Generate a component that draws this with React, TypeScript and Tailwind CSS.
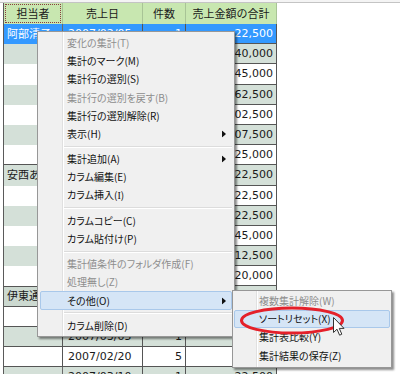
import React from "react";

type Row = {
  name?: string;
  date: string;
  n: string;
  amt: string;
  c1Bottom?: boolean;
  box?: boolean;
};

const rows: Row[] = [
  { name: "阿部清子", date: "2007/02/05", n: "1", amt: "22,500" },
  { date: "", n: "", amt: "40,000" },
  { date: "", n: "", amt: "45,000" },
  { date: "", n: "", amt: "62,500" },
  { date: "", n: "", amt: "102,500" },
  { date: "", n: "", amt: "107,500" },
  { date: "", n: "", amt: "225,000", c1Bottom: true },
  { name: "安西あゆみ", date: "", n: "", amt: "22,500" },
  { date: "", n: "", amt: "22,500" },
  { date: "", n: "", amt: "22,500" },
  { date: "", n: "", amt: "45,000" },
  { date: "", n: "", amt: "112,500" },
  { date: "", n: "", amt: "20,000" },
  { name: "伊東通子", date: "", n: "", amt: "", box: true },
  { date: "", n: "", amt: "", c1Bottom: true },
  { date: "2007/03/05", n: "1", amt: "", c1Bottom: true },
  { date: "2007/02/20", n: "5", amt: "12,500", c1Bottom: true },
  { date: "2007/03/10", n: "1", amt: "22,500" },
];

function TableRow({ r, i }: { r: Row; i: number }) {
  const sel = i === 0;
  const gray = i % 2 === 1;
  const bg = sel ? "bg-[#3399ff] text-white" : gray ? "bg-[#d4e0d8] text-[#1a1a1a]" : "bg-white text-[#1a1a1a]";
  const c1 = r.box
    ? "border-y border-[#555555] bg-[#ccd9d0]"
    : r.c1Bottom
    ? "border-b border-[#555555]"
    : "";
  return (
    <div className={`flex h-[20.2px] ${bg}`}>
      <div className={`w-[59px] h-full border-r border-[#6a6a6a] pl-[3px] flex items-center overflow-hidden whitespace-nowrap ${c1}`}>
        {r.name ?? ""}
      </div>
      <div className="w-[80px] h-full border-r border-b border-[#555555] pl-[5px] flex items-center whitespace-nowrap overflow-hidden">
        {r.date}
      </div>
      <div className="w-[43px] h-full border-r border-b border-[#555555] pr-[3px] flex items-center justify-end">
        {r.n}
      </div>
      <div className="w-[91px] h-full border-r border-b border-[#555555] pr-[3px] flex items-center justify-end whitespace-nowrap overflow-hidden">
        {r.amt}
      </div>
    </div>
  );
}

function MItem({
  label,
  disabled,
  arrow,
  hl,
  pl,
}: {
  label: React.ReactNode;
  disabled?: boolean;
  arrow?: boolean;
  hl?: boolean;
  pl: "main" | "sub";
}) {
  const base = hl
    ? "border border-[#a9c8ea] bg-[#d5e5f6] rounded-[2px]"
    : "border border-transparent";
  const pad = pl === "main" ? "pl-[26px]" : "pl-[24px]";
  return (
    <div className={`relative h-[18.2px] flex items-center whitespace-nowrap ${pad} ${base} ${disabled ? "text-[#8d8d8d]" : "text-[#111111]"}`}>
      {label}
      {arrow && (
        <svg className="absolute right-[5px] top-1/2 -translate-y-1/2" width="4" height="7" viewBox="0 0 4 7">
          <path d="M0 0 L4 3.5 L0 7 Z" fill="#111" />
        </svg>
      )}
    </div>
  );
}

function Sep() {
  return (
    <div className="h-[7px] pl-[22px] flex flex-col justify-center">
      <div className="h-px bg-[#dcdcdc]" />
      <div className="h-px bg-white" />
    </div>
  );
}

export default function App() {
  return (
    <div className="relative w-[400px] h-[374px] overflow-hidden bg-white text-[11px] leading-none">
      <div className="h-[3px] border-b border-[#c4c4c4] bg-[#f4f4f4]" />
      <div className="flex">
        <div className="w-[3px] bg-white" />
        <div className="border-l border-[#5a5a5a] font-['DejaVu_Sans','Noto_Sans_CJK_JP',sans-serif]">
          <div className="flex h-[21px] bg-[#c8e7b0] text-[#1a1a1a] font-['Noto_Sans_CJK_JP',sans-serif] text-[11px]">
            <div className="w-[59px] h-full border-r border-[#a8c496] p-[1px]">
              <div className="w-full h-full border border-dotted border-[#8a3d3d] flex items-center justify-center">
                担当者
              </div>
            </div>
            <div className="w-[80px] h-full border-r border-[#a8c496] flex items-center justify-center">売上日</div>
            <div className="w-[43px] h-full border-r border-[#a8c496] flex items-center justify-center">件数</div>
            <div className="w-[91px] h-full border-r border-[#a8c496] flex items-center justify-center">売上金額の合計</div>
          </div>
          {rows.map((r, i) => (
            <TableRow key={i} r={r} i={i} />
          ))}
        </div>
      </div>

      <div className="absolute left-[37px] top-[31px] w-[198px] border border-[#979797] bg-[#f0f0f0] pt-[2px] pb-[1px] px-[2px] shadow-[2px_2px_2px_rgba(0,0,0,0.45)] font-['Noto_Sans_CJK_JP',sans-serif] text-[10px] [font-feature-settings:'palt']">
        <div className="absolute left-[24px] top-0 bottom-0 w-px bg-[#e0e0e0]" />
        <div className="absolute left-[25px] top-0 bottom-0 w-px bg-white" />
        <MItem pl="main" label="変化の集計(T)" disabled />
        <MItem pl="main" label="集計のマーク(M)" />
        <MItem pl="main" label="集計行の選別(S)" />
        <MItem pl="main" label="集計行の選別を戻す(B)" disabled />
        <MItem pl="main" label="集計行の選別解除(R)" />
        <MItem pl="main" label="表示(H)" arrow />
        <Sep />
        <MItem pl="main" label="集計追加(A)" arrow />
        <MItem pl="main" label="カラム編集(E)" />
        <MItem
          pl="main"
          label={
            <span>
              カラム挿入(<span className="font-['Liberation_Serif',serif]">I</span>)
            </span>
          }
        />
        <Sep />
        <MItem pl="main" label="カラムコピー(C)" />
        <MItem pl="main" label="カラム貼付け(P)" />
        <Sep />
        <MItem pl="main" label="集計値条件のフォルダ作成(F)" disabled />
        <MItem pl="main" label="処理無し(Z)" disabled />
        <MItem pl="main" label="その他(O)" arrow hl />
        <Sep />
        <MItem pl="main" label="カラム削除(D)" />
      </div>

      <div className="absolute left-[232px] top-[290px] w-[160px] border border-[#979797] bg-[#f0f0f0] pt-[1px] pb-[2px] px-[1px] shadow-[2px_2px_2px_rgba(0,0,0,0.45)] font-['Noto_Sans_CJK_JP',sans-serif] text-[10px] [font-feature-settings:'palt']">
        <div className="absolute left-[23px] top-0 bottom-0 w-px bg-[#e0e0e0]" />
        <div className="absolute left-[24px] top-0 bottom-0 w-px bg-white" />
        <MItem pl="sub" label="複数集計解除(W)" disabled />
        <MItem pl="sub" label="ソートリセット(X)" hl />
        <MItem pl="sub" label="集計表比較(Y)" />
        <MItem pl="sub" label="集計結果の保存(Z)" />
      </div>

      <svg className="absolute left-[239px] top-[305px]" width="106" height="31" viewBox="0 0 106 31">
        <ellipse cx="53" cy="15.5" rx="50.5" ry="12.5" fill="none" stroke="#e4202a" strokeWidth="3" />
      </svg>

      <svg className="absolute left-[333px] top-[317px]" width="13" height="20" viewBox="0 0 13 20">
        <path
          d="M0.5 0.5 L0.5 15.5 L4 12.2 L6.6 18.2 L8.8 17.2 L6.3 11.4 L11 11.4 Z"
          fill="#ffffff"
          stroke="#333333"
          strokeWidth="1"
          strokeLinejoin="round"
        />
      </svg>
    </div>
  );
}
